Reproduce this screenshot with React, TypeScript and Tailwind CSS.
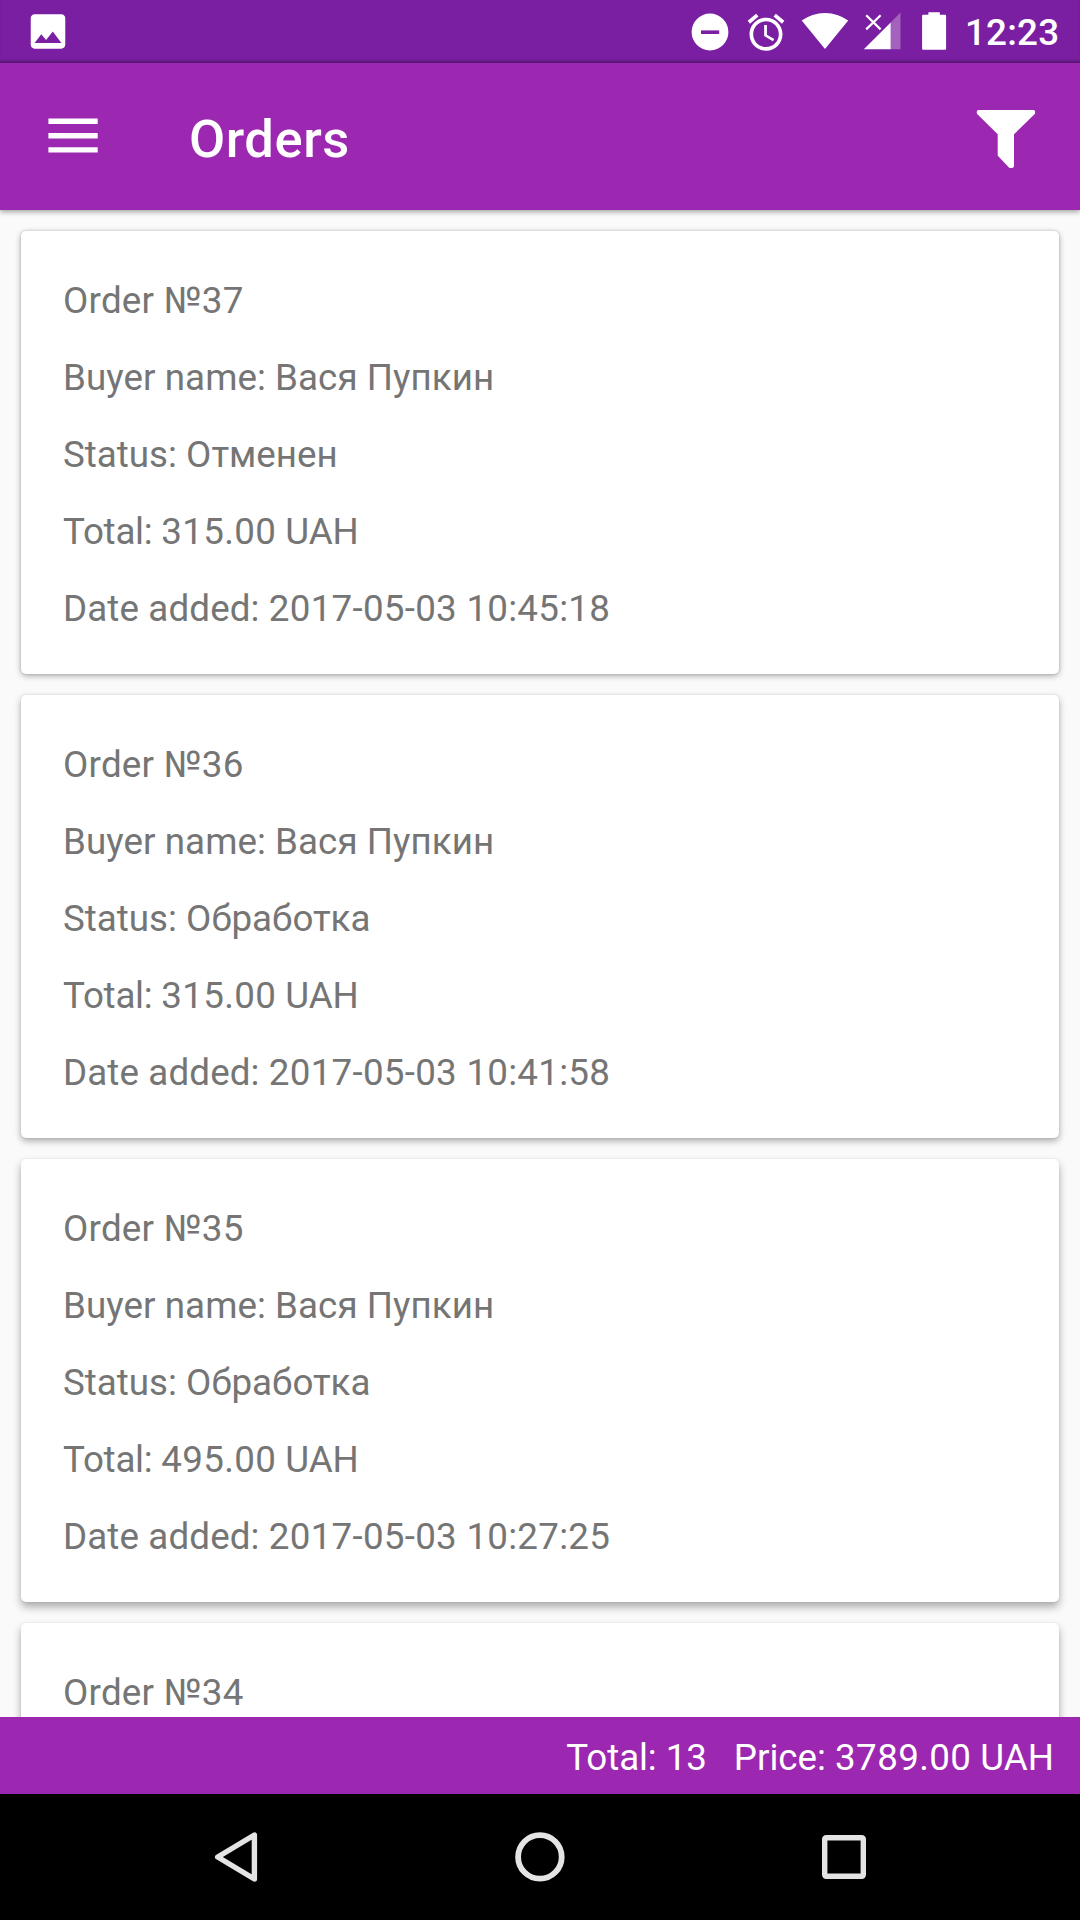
type Order = {
  id: number;
  shadow: string;
  details?: { status: string; total: string; date: string };
};

// Card shadows deepen towards the bottom of the list.
const orders: Order[] = [
  {
    id: 37,
    shadow: "shadow-[0_2px_6px_rgba(0,0,0,0.3),0_0_3px_rgba(0,0,0,0.16)]",
    details: { status: "Отменен", total: "315.00", date: "2017-05-03 10:45:18" },
  },
  {
    id: 36,
    shadow: "shadow-[0_3px_7px_rgba(0,0,0,0.32),0_0_2px_rgba(0,0,0,0.12)]",
    details: { status: "Обработка", total: "315.00", date: "2017-05-03 10:41:58" },
  },
  {
    id: 35,
    shadow: "shadow-[0_5px_8px_rgba(0,0,0,0.32),0_0_2px_rgba(0,0,0,0.1)]",
    details: { status: "Обработка", total: "495.00", date: "2017-05-03 10:27:25" },
  },
  { id: 34, shadow: "shadow-[0_5px_8px_rgba(0,0,0,0.32),0_0_2px_rgba(0,0,0,0.1)]" },
];

function StatusBar() {
  return (
    <header className="flex h-[63px] shrink-0 items-start bg-[#7b1fa2] pl-[25px] text-white shadow-[inset_0_-3px_3px_-1px_rgba(0,0,0,0.28)]">
      <svg className="mt-[8px] size-[46px]" viewBox="0 -0.2 24 24" fill="currentColor">
        <path d="M21 19V5c0-1.1-.9-2-2-2H5c-1.1 0-2 .9-2 2v14c0 1.1.9 2 2 2h14c1.1 0 2-.9 2-2zM8.5 13.5l2.5 3.01L14.5 12l4.5 6H5l3.5-4.5z" />
      </svg>
      <div className="ml-auto flex h-full">
        <svg className="h-[63px] w-[54px]" viewBox="690 0 54 63">
          <circle cx="710" cy="32" r="18.4" fill="#fff" />
          <path d="M701 30.4h18.2v3.6h-18.2z" fill="#7b1fa2" />
        </svg>
        <svg className="mt-[10px] size-[44px]" viewBox="0 -0.2 24 24" fill="currentColor">
          <path d="M22 5.72l-4.6-3.86-1.29 1.53 4.6 3.86L22 5.72zM7.88 3.39L6.6 1.86 2 5.71l1.29 1.53 4.59-3.85zM12.5 8H11v6l4.75 2.85.75-1.23-4-2.37V8zM12 4c-4.97 0-9 4.03-9 9s4.02 9 9 9c4.97 0 9-4.03 9-9s-4.03-9-9-9zm0 16c-3.87 0-7-3.13-7-7s3.13-7 7-7 7 3.13 7 7-3.13 7-7 7z" />
        </svg>
        <svg className="h-[63px] w-[68px]" viewBox="788 0 68 63" fill="currentColor">
          <path d="M825 49L801.7 20.6Q812 12.9 825 12.9T848.2 20.6Z" />
        </svg>
        <svg className="h-[63px] w-[56px]" viewBox="856 0 56 63" fill="currentColor">
          <path d="M863.8 49.2L890.7 22.4V49.2Z" />
          <path d="M890.7 49.2V22.4L900.5 12.6V49.2Z" opacity="0.3" />
          <path d="M866.2 15.2l14.4 14.2M880.6 15.2l-14.4 14.2" stroke="#fff" strokeWidth="2.2" />
        </svg>
        <svg className="h-[63px] w-[54px]" viewBox="912 0 54 63" fill="currentColor">
          <path d="M923 14.8h5.4v-2.6h11.4v2.6h5.4q.9 0 .9.9v33.1q0 .9-.9.9h-22.2q-.9 0-.9-.9v-33.1q0-.9.9-.9z" />
        </svg>
        <span className="-ml-px mt-[11px] w-[115px] text-[36.75px] leading-[43px] font-medium tracking-[0.2px]">12:23</span>
      </div>
    </header>
  );
}

function AppBar() {
  return (
    <div className="z-10 flex h-[147px] shrink-0 items-center bg-[#9c27b0] text-white shadow-[0_2px_5px_rgba(0,0,0,0.35)]">
      <svg className="h-[147px] w-[189px]" viewBox="0 63 189 147" fill="currentColor">
        <path d="M48.4 118.6h49.3v5.4H48.4zM48.4 133.1h49.3v5.3H48.4zM48.4 147.3h49.3v5.3H48.4z" />
      </svg>
      <h1 className="mt-[4px] text-[52.5px] leading-[62px] font-medium tracking-[0.55px]">Orders</h1>
      <svg className="ml-auto h-[147px] w-[110px]" viewBox="970 63 110 147" fill="currentColor">
        <path d="M978.5 110h55q1.6 0 1.6 1.5v1.4q0 .7-.6 1.3L1014 134.3V165.7Q1014 168 1011.7 168h-1.3q-.8 0-1.4-.6L998.3 156.3Q997.7 155.7 997.7 155V134.3L977.4 114.2q-.6-.6-.6-1.3v-1.4q0-1.5 1.7-1.5z" />
      </svg>
    </div>
  );
}

function OrderCard({ order }: { order: Order }) {
  const { id, shadow, details } = order;
  return (
    <article
      className={`flex h-[443px] shrink-0 flex-col gap-[34px] rounded-[5px] bg-white pt-[48px] pl-[42px] text-[36.75px] leading-[43px] text-[#757575] ${shadow}`}
    >
      <p className="tracking-[0.25px]">Order №{id}</p>
      {details && (
        <>
          <p className="tracking-[0.06px]">Buyer name: Вася Пупкин</p>
          <p>Status: {details.status}</p>
          <p>
            <span className="tracking-[-0.25px]">Total: </span>
            <span className="tracking-[0.3px]">{details.total}</span> UAH
          </p>
          <p>
            <span className="tracking-[0.12px]">Date added: </span>
            <span className="tracking-[0.26px]">{details.date}</span>
          </p>
        </>
      )}
    </article>
  );
}

function NavBar() {
  return (
    <nav className="flex h-[126px] shrink-0 items-center justify-between bg-black px-[186px]">
      <svg className="size-[100px]" viewBox="186 1807 100 100" fill="none" stroke="#e4e4e4" strokeWidth="5.4" strokeLinejoin="round">
        <path d="M217.7 1857L254.4 1835V1879Z" />
      </svg>
      <svg className="size-[100px]" viewBox="490 1807 100 100" fill="none" stroke="#e4e4e4" strokeWidth="5.8">
        <circle cx="539.9" cy="1856.9" r="21.8" />
      </svg>
      <svg className="size-[100px]" viewBox="794 1807 100 100" fill="none" stroke="#e4e4e4" strokeWidth="5.4">
        <rect x="824.7" y="1837.7" width="38.6" height="38.6" rx="1.5" />
      </svg>
    </nav>
  );
}

export default function App() {
  return (
    <div className="flex h-[1920px] w-[1080px] flex-col overflow-hidden bg-[#fafafa] font-[Roboto,sans-serif]">
      <StatusBar />
      <AppBar />
      <main className="flex min-h-0 flex-1 flex-col gap-[21px] overflow-hidden px-[21px] pt-[21px]">
        {orders.map((order) => (
          <OrderCard key={order.id} order={order} />
        ))}
      </main>
      <footer className="flex h-[77px] shrink-0 items-center justify-end gap-[27px] bg-[#9c27b0] pt-[3px] pr-[26px] text-[36.75px] leading-[43px] text-white">
        <span className="tracking-[-0.1px]">Total: 13</span>
        <span>
          Price: <span className="tracking-[0.36px]">3789.00</span> UAH
        </span>
      </footer>
      <NavBar />
    </div>
  );
}
